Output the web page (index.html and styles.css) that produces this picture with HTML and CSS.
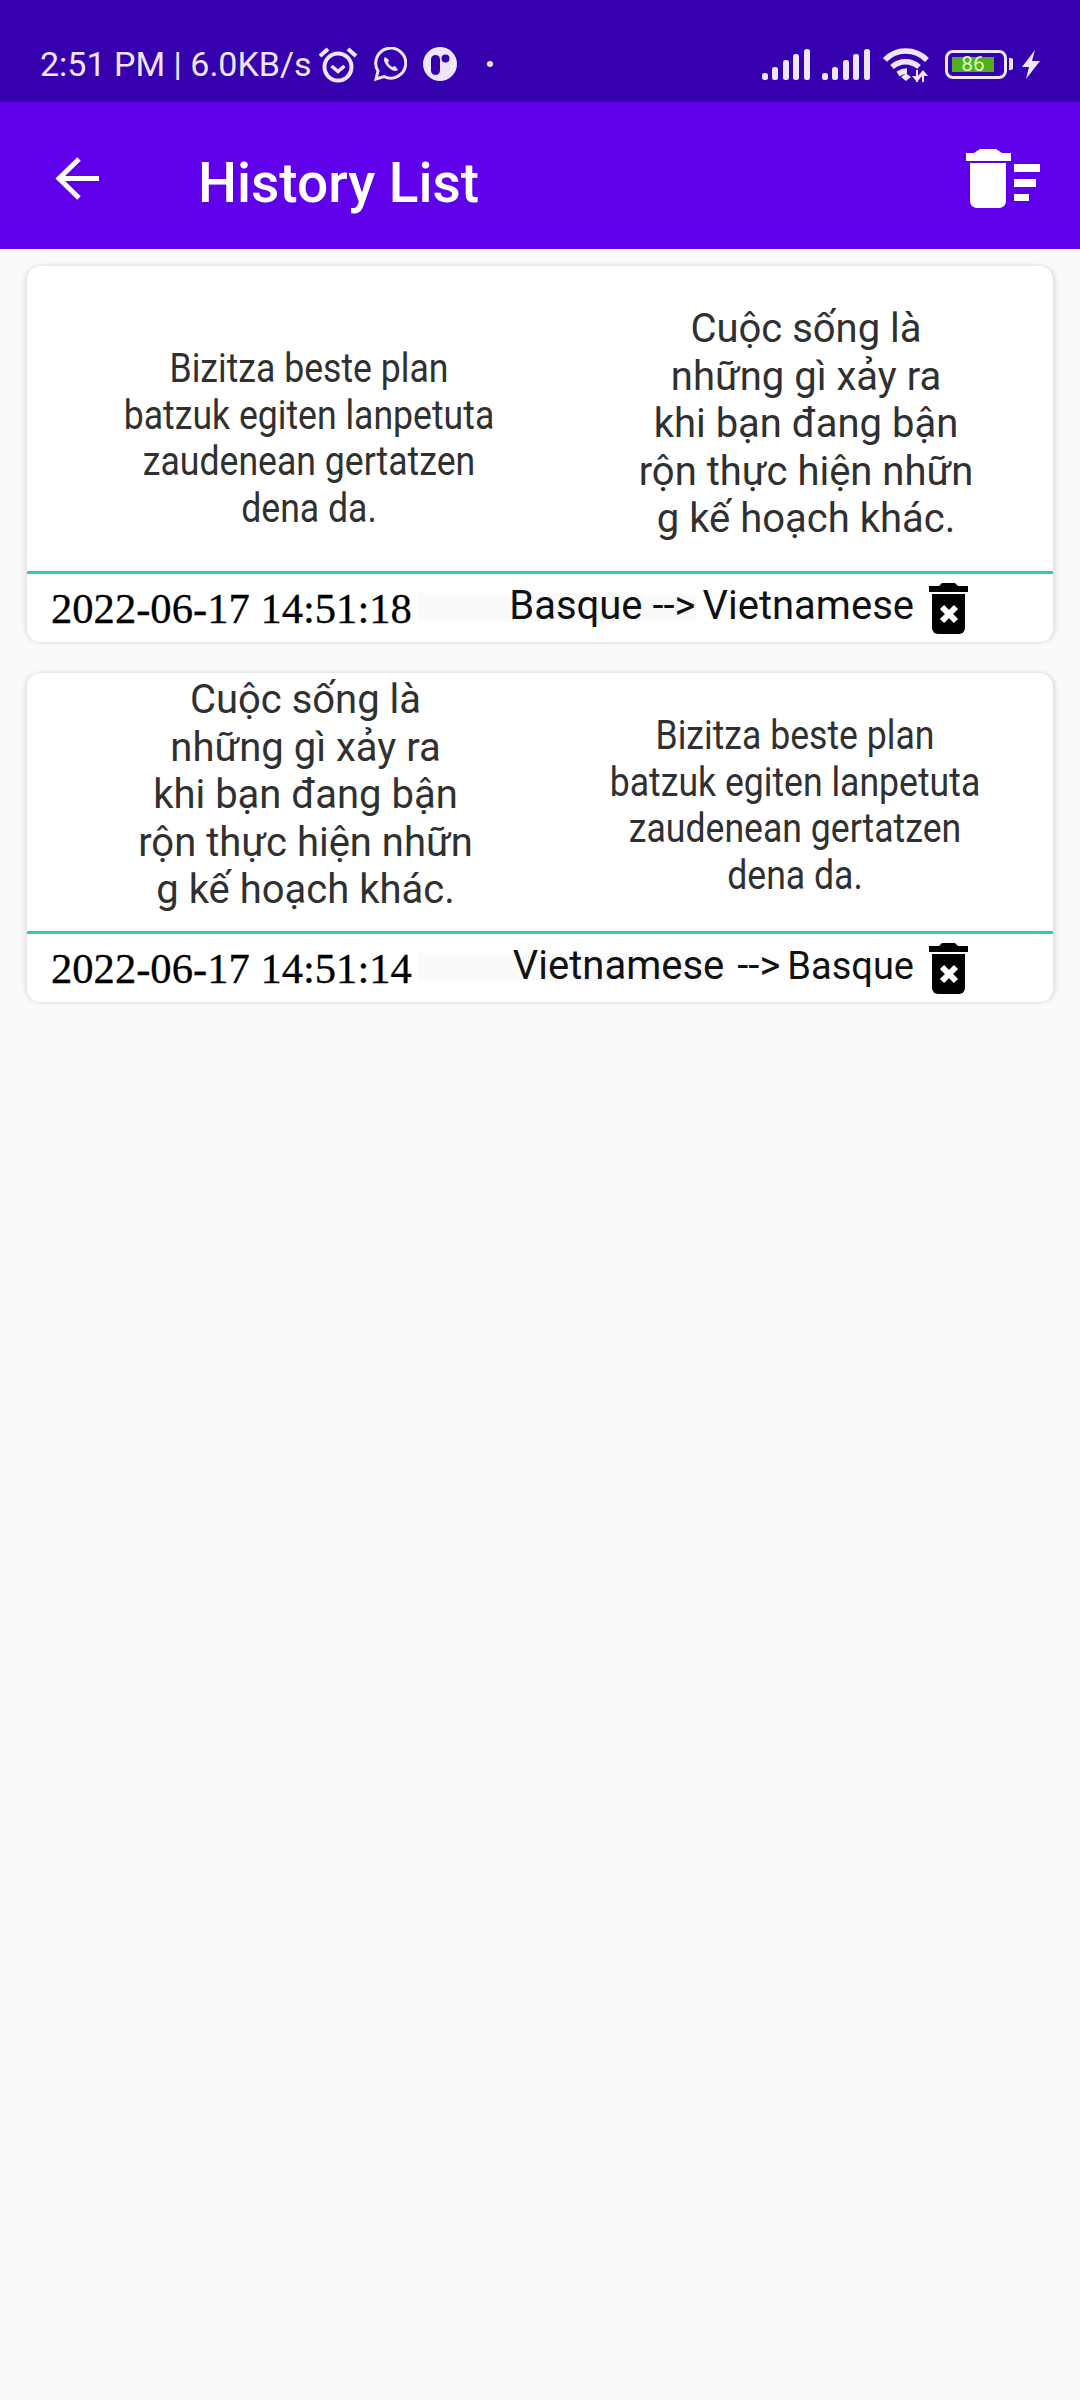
FILE: index.html
```html
<!DOCTYPE html>
<html>
<head lang="en">
    <meta charset="UTF-8">
    <link rel="stylesheet" href="styles.css">
    <title>History List</title>
</head>
<body>
<svg class="defs" width="0" height="0">
    <symbol id="signal" viewBox="0 0 48 31">
        <rect x="0" y="24" width="6" height="7" rx="2.500"/>
        <rect x="10" y="18" width="6" height="13" rx="2.500"/>
        <rect x="21" y="11" width="6" height="20" rx="2.500"/>
        <rect x="31" y="5" width="6" height="26" rx="2.500"/>
        <rect x="42" y="0" width="6" height="31" rx="2.500"/>
    </symbol>
    <symbol id="bin" viewBox="0 0 39 51">
        <path d="M13 0h13l3 3h10v6H0V3h10z" fill="#000"/>
        <path d="M3 11h33v34a6 6 0 0 1-6 6H9a6 6 0 0 1-6-6z" fill="#000"/>
        <path d="M13 24l14 14M27 24L13 38" stroke="#fff" stroke-width="6" fill="none"/>
    </symbol>
</svg>

<div class="status-bar">
    <span class="status-text">2:51 PM | 6.0KB/s</span>
    <svg class="ic-alarm" width="40" height="37" viewBox="0 0 40 37" fill="none" stroke="#eee6fb">
        <circle cx="20" cy="21" r="13.500" stroke-width="4"/>
        <path d="M13.500 20l6.500 5.500 6.500-5.500" stroke-width="3.500"/>
        <path d="M2 10l8-7M38 10l-8-7" stroke-width="4"/>
    </svg>
    <svg class="ic-whatsapp" width="34" height="35" viewBox="0 0 34 35" fill="none" stroke="#eee6fb">
        <path d="M3 32l2-8A15 15 0 1 1 11 29.500z" stroke-width="3"/>
        <path d="M12 10c-2 2-1 6 3 10s8 5 10 3l-3-4-2.500 1c-2-1-3.500-2.500-4.500-4.500l1-2.500z" fill="#eee6fb" stroke="none"/>
    </svg>
    <svg class="ic-app" width="34" height="34" viewBox="0 0 34 34">
        <circle cx="17" cy="17" r="17" fill="#eee6fb"/>
        <rect x="8" y="8" width="9" height="20" rx="4.500" fill="#3600ae"/>
        <circle cx="22.500" cy="11.500" r="4" fill="#3600ae"/>
    </svg>
    <span class="status-dot"></span>
    <span class="status-spacer"></span>
    <svg class="ic-signal" width="48" height="31"><use href="#signal"/></svg>
    <svg class="ic-signal second" width="48" height="31"><use href="#signal"/></svg>
    <svg class="ic-wifi" width="46" height="35" viewBox="0 0 46 35" fill="none" stroke="#eee6fb" stroke-width="5.500">
        <path d="M2 13C13 1 32 1 44 13"/>
        <path d="M9 20c8-7 19-7 27 0"/>
        <path d="M15 27c3-2 6-3 9-3"/>
        <path d="M18 30l5-3.500 5 3.500-5 4z" fill="#eee6fb" stroke="none"/>
        <path d="M33 23v12h2V23zM29 29l5 6 5-6zM40 23l-5 6h10zM39 35h2V25h-2z" fill="#eee6fb" stroke="none"/>
    </svg>
    <div class="battery"><span class="battery-fill">86</span></div>
    <span class="battery-nub"></span>
    <svg class="ic-bolt" width="18" height="29" viewBox="0 0 18 29">
        <path d="M13 0L0 17h7L4 29l14-18h-8z" fill="#eee6fb"/>
    </svg>
</div>

<div class="app-bar">
    <svg class="ic-back" width="44" height="43" viewBox="0 0 44 43" fill="none" stroke="#fff" stroke-width="5">
        <path d="M44 21.500H4M24 2L4 21.500 24 41"/>
    </svg>
    <span class="app-title">History List</span>
    <svg class="ic-sweep" width="74" height="59" viewBox="0 0 74 59" fill="#fff">
        <path d="M14 0h16l6 4h9v8H0V4h8z"/>
        <path d="M4 14h36v38a7 7 0 0 1-7 7H11a7 7 0 0 1-7-7z"/>
        <rect x="48" y="15" width="26" height="8"/>
        <rect x="48" y="30" width="22" height="8"/>
        <rect x="48" y="45" width="15" height="7"/>
    </svg>
</div>

<div class="list">
    <div class="card card-first">
        <div class="card-body">
            <div class="col col-left"><p class="squeezed">Bizitza beste plan<br>batzuk egiten lanpetuta<br>zaudenean gertatzen<br>dena da.</p></div>
            <div class="col col-right"><p>Cuộc sống là<br>những gì xảy ra<br>khi bạn đang bận<br>rộn thực hiện nhữn<br>g kế hoạch khác.</p></div>
        </div>
        <div class="card-foot">
            <span class="date">2022-06-17 14:51:18</span>
            <span class="lang-from">Basque <span class="arrow">--&gt;</span></span>
            <span class="lang-to">Vietnamese</span>
            <svg class="ic-bin" width="39" height="51"><use href="#bin"/></svg>
        </div>
    </div>

    <div class="card card-second">
        <div class="card-body">
            <div class="col col-left"><p>Cuộc sống là<br>những gì xảy ra<br>khi bạn đang bận<br>rộn thực hiện nhữn<br>g kế hoạch khác.</p></div>
            <div class="col col-right"><p class="squeezed">Bizitza beste plan<br>batzuk egiten lanpetuta<br>zaudenean gertatzen<br>dena da.</p></div>
        </div>
        <div class="card-foot">
            <span class="date">2022-06-17 14:51:14</span>
            <span class="lang-from">Vietnamese</span>
            <span class="arrow arrow-out">--&gt;</span>
            <span class="lang-to">Basque</span>
            <svg class="ic-bin" width="39" height="51"><use href="#bin"/></svg>
        </div>
    </div>
</div>
</body>
</html>
```

FILE: styles.css
```css
html, body {
    margin: 0;
    padding: 0;
}
body {
    width: 1080px;
    height: 2400px;
    background: #fafafa;
    font-family: Roboto, "Noto Sans", sans-serif;
    overflow: hidden;
}
p {
    margin: 0;
}
.defs {
    position: absolute;
}

/* status bar */
.status-bar {
    height: 76px;
    padding: 26px 0 0 40px;
    background: #3600ae;
    display: flex;
    align-items: center;
    color: #eee6fb;
}
.status-text {
    font-size: 34px;
    white-space: nowrap;
    width: 278px;
}
.ic-whatsapp {
    margin-left: 15px;
}
.ic-app {
    margin-left: 16px;
}
.status-dot {
    width: 6px;
    height: 6px;
    border-radius: 50%;
    background: #eee6fb;
    margin-left: 30px;
}
.status-spacer {
    flex: 1;
}
.ic-signal {
    fill: #eee6fb;
}
.ic-signal.second {
    margin-left: 12px;
}
.ic-wifi {
    margin-left: 13px;
}
.battery {
    width: 62px;
    height: 29px;
    box-sizing: border-box;
    margin-left: 16px;
    border: 3px solid #eee6fb;
    border-radius: 8px;
    padding: 4px;
}
.battery-fill {
    display: block;
    width: 42px;
    height: 15px;
    background: #52ae1c;
    color: #dcffc0;
    font-size: 21px;
    line-height: 15px;
    text-align: center;
}
.battery-nub {
    width: 4px;
    height: 12px;
    margin-left: 2px;
    border-radius: 0 2px 2px 0;
    background: #eee6fb;
}
.ic-bolt {
    margin: 0 40px 0 9px;
}

/* app bar */
.app-bar {
    height: 147px;
    background: #6000ea;
    display: flex;
    align-items: center;
    padding-left: 55px;
    color: #fff;
}
.ic-back {
    margin-top: 5px;
}
.app-title {
    margin: 14px 0 0 99px;
    font-size: 55px;
    font-weight: 500;
    white-space: nowrap;
}
.ic-sweep {
    margin: 5px 40px 0 auto;
}

/* cards */
.list {
    padding: 17px 27px 0;
}
.card {
    width: 1026px;
    background: #fff;
    border-radius: 14px;
    box-shadow: 3px 0 4px rgba(0, 0, 0, 0.1), -3px 0 4px rgba(0, 0, 0, 0.08);
    margin-bottom: 31px;
}
.card-body {
    display: grid;
    border-bottom: 3px solid #34c8b8;
    font-size: 40px;
    color: #303030;
    text-align: center;
}
.card-first .card-body {
    height: 305px;
    grid-template-columns: 564px 1fr;
    padding-right: 32px;
}
.card-second .card-body {
    height: 258px;
    grid-template-columns: 557px 1fr;
    padding-right: 47px;
}
.col p {
    line-height: 47.500px;
    white-space: nowrap;
}
.col p.squeezed {
    line-height: 46.500px;
    transform: scaleX(0.89);
}
.card-first .col-left {
    padding-top: 80px;
}
.card-first .col-right {
    padding-top: 39px;
}
.card-second .col-left {
    padding-top: 3px;
}
.card-second .col-right {
    padding-top: 40px;
}

.card-foot {
    display: flex;
    align-items: flex-start;
    height: 68px;
    padding: 0 85px 0 24px;
    color: #111;
    font-size: 40px;
    white-space: nowrap;
}
.date {
    font-family: "Liberation Serif", serif;
    font-size: 42.600px;
    line-height: 48px;
    margin-top: 11px;
    color: #000;
    -webkit-text-stroke: 0.3px #000;
}
.lang-from {
    flex: 1;
    height: 28px;
    margin: 19px 0 0 6px;
    background: #fafafa;
    line-height: 26px;
    text-align: right;
}
.arrow {
    font-variant-ligatures: none;
}
.arrow-out {
    margin: 19px 0 0 13px;
    line-height: 26px;
}
.lang-to {
    margin: 19px 0 0 7px;
    line-height: 26px;
}
.card-second .lang-to {
    font-size: 38px;
}
.ic-bin {
    margin: 9px 0 0 15px;
}
```
